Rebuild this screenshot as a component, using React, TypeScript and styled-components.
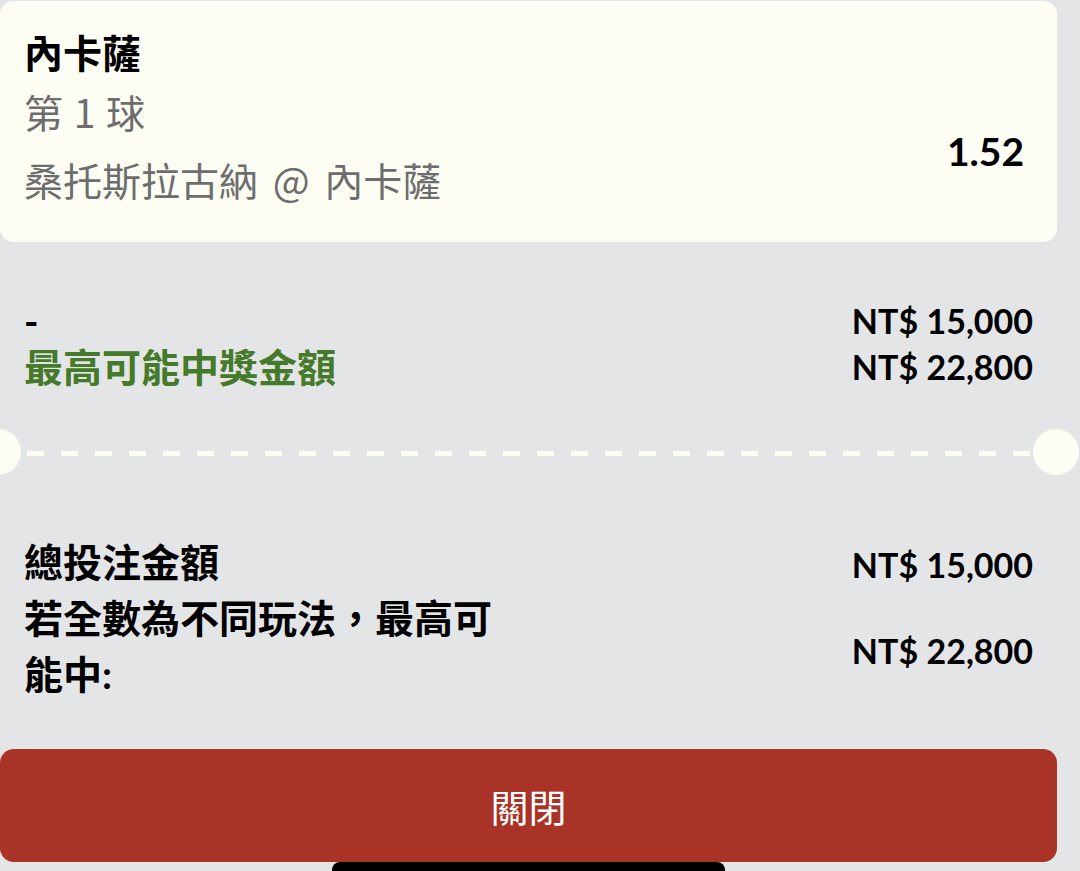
import styled, { createGlobalStyle } from 'styled-components'

const cream = '#fdfdf4'
const fontStack = `Lato, "Noto Sans CJK TC", "Noto Sans", sans-serif`

const GlobalStyle = createGlobalStyle`
  html, body {
    margin: 0;
    padding: 0;
    background: #e4e5e7;
    height: 871px;
    overflow: hidden;
  }
  body {
    font-family: ${fontStack};
    color: #0b0b0b;
  }
  * {
    box-sizing: border-box;
  }
`

const Screen = styled.div`
  position: relative;
  width: 1080px;
  height: 871px;
`

const Sheet = styled.div`
  width: 1057px;
  padding-top: 1px;
  display: flex;
  flex-direction: column;
`

const SelectionCard = styled.div`
  height: 241px;
  background: ${cream};
  border-radius: 14px;
  padding: 23px 33px 0 24px;
  display: flex;
  justify-content: space-between;
  align-items: flex-start;
`

const SelectionInfo = styled.div`
  display: flex;
  flex-direction: column;
`

const TeamName = styled.div`
  font-size: 39px;
  font-weight: 700;
  line-height: 58px;
  color: #000;
`

const SubLine = styled.div<{ $gap?: number; $spacing?: number }>`
  font-family: "Noto Sans CJK TC", sans-serif;
  font-size: 39px;
  font-weight: 400;
  line-height: 58px;
  color: #6d6d6d;
  margin-top: ${p => p.$gap ?? 0}px;
  word-spacing: ${p => p.$spacing ?? 0}px;
`

const Odds = styled.div`
  font-size: 39px;
  font-weight: 700;
  line-height: 46px;
  margin-top: 104px;
  color: #000;
`

const Summary = styled.div<{ $top: number; $rowHeight: number }>`
  display: grid;
  grid-template-columns: 490px 1fr;
  align-items: center;
  padding: ${p => p.$top}px 24px 0 24px;
  grid-auto-rows: minmax(${p => p.$rowHeight}px, auto);
`

const Label = styled.div<{ $green?: boolean; $lineHeight: number }>`
  font-size: 39px;
  font-weight: 700;
  line-height: ${p => p.$lineHeight}px;
  color: ${p => (p.$green ? '#467a2b' : '#000')};
`

const Amount = styled.div<{ $shift?: number }>`
  justify-self: end;
  font-size: 34px;
  font-weight: 700;
  line-height: 46px;
  color: #000;
  white-space: nowrap;
  padding-top: ${p => p.$shift ?? 0}px;
`

const Divider = styled.div`
  position: relative;
  height: 46px;
  margin-top: 39px;
  padding: 0 27px;
  display: flex;
  align-items: center;

  &::before,
  &::after {
    content: '';
    position: absolute;
    top: 0;
    width: 46px;
    height: 46px;
    border-radius: 50%;
    background: ${cream};
  }
  &::before {
    left: -25px;
  }
  &::after {
    right: -22px;
  }
`

const DashLine = styled.div`
  flex: 1;
  height: 5px;
  margin-top: 3px;
  background: repeating-linear-gradient(
    to right,
    ${cream} 0 17px,
    transparent 17px 34px
  );
`

const CloseButton = styled.button`
  margin-top: 47px;
  height: 113px;
  width: 100%;
  border: none;
  border-radius: 14px;
  background: #a83326;
  color: #fff;
  font-family: "Noto Sans CJK TC", sans-serif;
  font-size: 38px;
  font-weight: 400;
  cursor: pointer;
`

const HomeIndicator = styled.div`
  position: absolute;
  left: 332px;
  bottom: 0;
  width: 393px;
  height: 9px;
  background: #000;
  border-radius: 8px 8px 0 0;
`

export default function App() {
  return (
    <Screen>
      <GlobalStyle />
      <Sheet>
        <SelectionCard>
          <SelectionInfo>
            <TeamName>內卡薩</TeamName>
            <SubLine $spacing={2}>第 1 球</SubLine>
            <SubLine $gap={10} $spacing={6}>桑托斯拉古納 @ 內卡薩</SubLine>
          </SelectionInfo>
          <Odds>1.52</Odds>
        </SelectionCard>

        <Summary $top={56} $rowHeight={46}>
          <Label $lineHeight={46}>-</Label>
          <Amount>NT$ 15,000</Amount>
          <Label $green $lineHeight={46}>最高可能中獎金額</Label>
          <Amount>NT$ 22,800</Amount>
        </Summary>

        <Divider>
          <DashLine />
        </Divider>

        <Summary $top={59} $rowHeight={56}>
          <Label $lineHeight={56}>總投注金額</Label>
          <Amount $shift={6}>NT$ 15,000</Amount>
          <Label $lineHeight={56}>若全數為不同玩法，最高可能中:</Label>
          <Amount $shift={10}>NT$ 22,800</Amount>
        </Summary>

        <CloseButton>關閉</CloseButton>
      </Sheet>
      <HomeIndicator />
    </Screen>
  )
}
